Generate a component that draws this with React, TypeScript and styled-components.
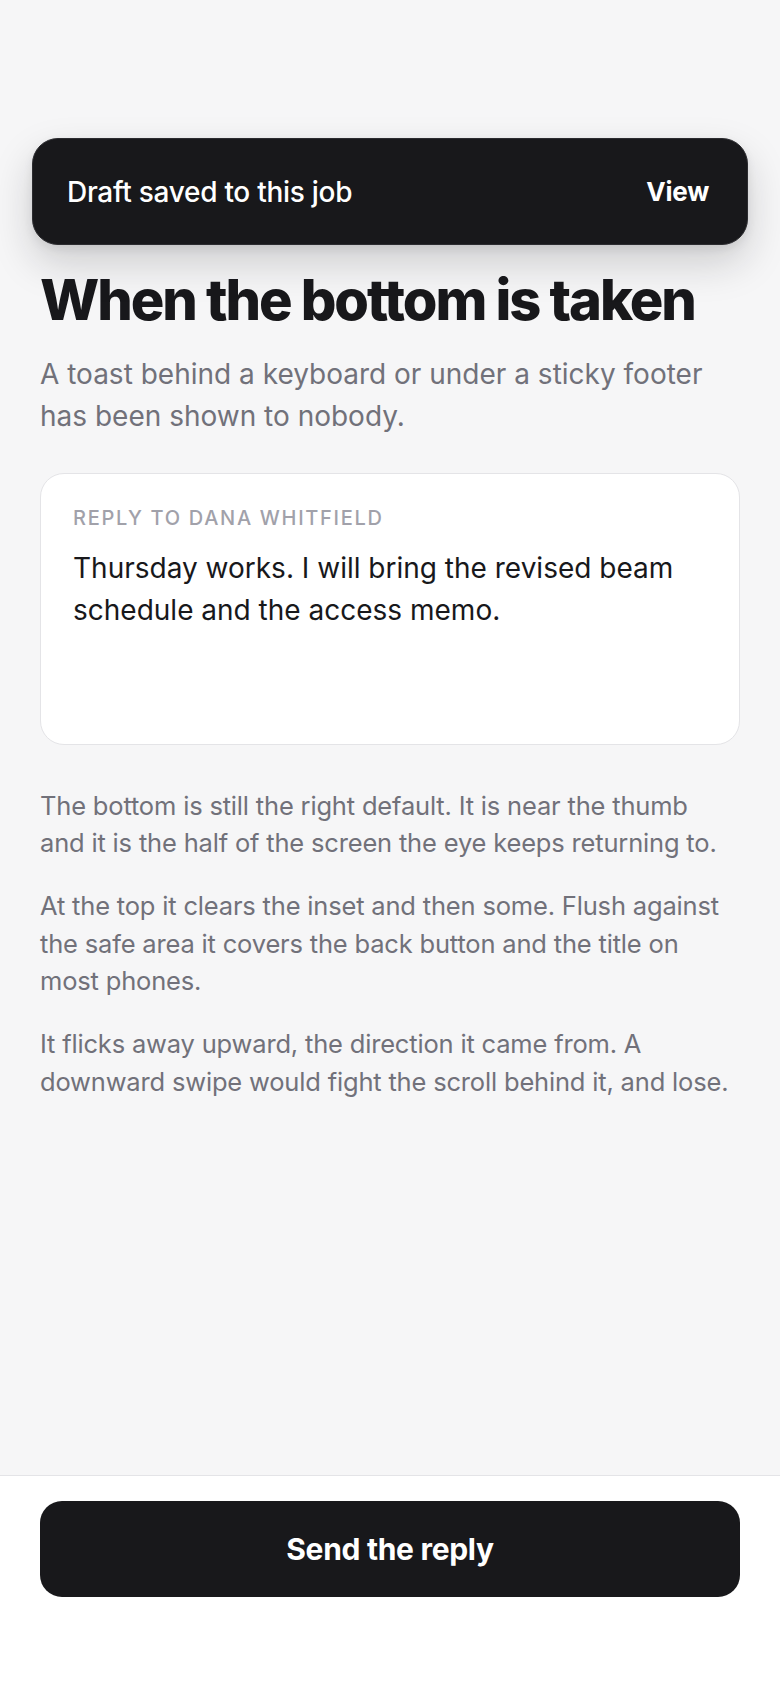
import styled, { createGlobalStyle } from 'styled-components';

const GlobalStyle = createGlobalStyle`
  html, body {
    margin: 0;
    padding: 0;
    background: #f6f6f7;
  }
  body {
    font-family: Inter, "Noto Sans", "Liberation Sans", sans-serif;
    -webkit-font-smoothing: antialiased;
  }
  * {
    box-sizing: border-box;
  }
`;

const Screen = styled.div`
  position: relative;
  min-height: 1688px;
  display: flex;
  flex-direction: column;
`;

// sits over the content, pinned below the top inset
const Toast = styled.div`
  position: absolute;
  top: 138px;
  left: 32px;
  right: 32px;
  height: 107px;
  display: flex;
  align-items: center;
  justify-content: space-between;
  padding: 0 38px 0 34px;
  background: #18181b;
  border: 1px solid #2c2c30;
  border-radius: 26px;
  box-shadow: 0 18px 40px rgba(24, 24, 27, 0.18), 0 4px 10px rgba(24, 24, 27, 0.08);
  color: #fff;
`;

const ToastText = styled.span`
  font-size: 28px;
  font-weight: 500;
  letter-spacing: -0.01em;
`;

const ToastAction = styled.button`
  border: 0;
  padding: 0;
  background: none;
  color: #fff;
  font-family: inherit;
  font-size: 26px;
  font-weight: 700;
  letter-spacing: -0.01em;
`;

const Main = styled.main`
  flex: 1;
  padding: 270px 40px 0;
`;

const Title = styled.h1`
  margin: 0;
  font-size: 56px;
  font-weight: 800;
  line-height: 1.1;
  letter-spacing: -0.037em;
  color: #18181b;
`;

const Lede = styled.p`
  margin: 21px 0 0;
  font-size: 28px;
  line-height: 42px;
  color: #71717a;
`;

const Card = styled.div`
  margin-top: 36px;
  padding: 32px;
  background: #fff;
  border: 1px solid #e4e4e7;
  border-radius: 24px;
`;

const CardLabel = styled.div`
  font-size: 20px;
  line-height: 24px;
  font-weight: 500;
  letter-spacing: 0.085em;
  text-transform: uppercase;
  color: #a1a1aa;
`;

const CardBody = styled.div`
  margin-top: 17px;
  min-height: 165px;
  font-size: 28px;
  line-height: 42px;
  color: #18181b;
`;

const Notes = styled.div`
  margin-top: 42px;
  display: flex;
  flex-direction: column;
  gap: 25px;
`;

const Note = styled.p`
  margin: 0;
  max-width: 690px;
  font-size: 25.5px;
  line-height: 37.7px;
  letter-spacing: -0.007em;
  color: #71717a;
`;

const Footer = styled.footer`
  padding: 25px 40px 91px;
  background: #fff;
  border-top: 1px solid #e4e4e7;
`;

const SendButton = styled.button`
  display: flex;
  align-items: center;
  justify-content: center;
  width: 100%;
  height: 96px;
  border: 0;
  border-radius: 22px;
  background: #18181b;
  color: #fff;
  font-family: inherit;
  font-size: 30px;
  font-weight: 700;
  letter-spacing: -0.01em;
`;

export default function App() {
  return (
    <>
      <GlobalStyle />
      <Screen>
        <Main>
          <Title>When the bottom is taken</Title>
          <Lede>A toast behind a keyboard or under a sticky footer has been shown to nobody.</Lede>
          <Card>
            <CardLabel>Reply to Dana Whitfield</CardLabel>
            <CardBody>Thursday works. I will bring the revised beam schedule and the access memo.</CardBody>
          </Card>
          <Notes>
            <Note>The bottom is still the right default. It is near the thumb and it is the half of the screen the eye keeps returning to.</Note>
            <Note>At the top it clears the inset and then some. Flush against the safe area it covers the back button and the title on most phones.</Note>
            <Note>It flicks away upward, the direction it came from. A downward swipe would fight the scroll behind it, and lose.</Note>
          </Notes>
        </Main>
        <Footer>
          <SendButton>Send the reply</SendButton>
        </Footer>
        <Toast role="status">
          <ToastText>Draft saved to this job</ToastText>
          <ToastAction>View</ToastAction>
        </Toast>
      </Screen>
    </>
  );
}
